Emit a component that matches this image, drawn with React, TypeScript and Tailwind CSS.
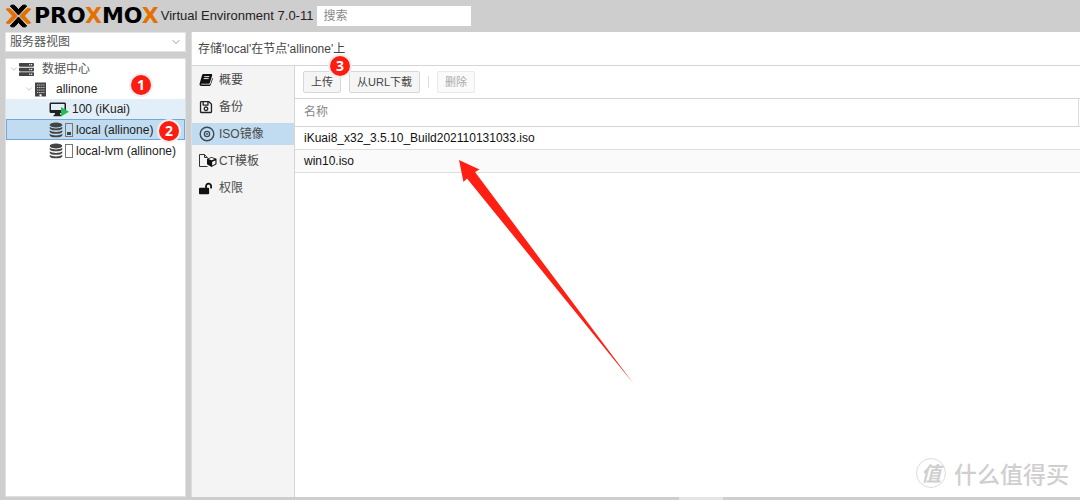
import type { ReactNode } from 'react'
import { FaLockOpen, FaRegSave, FaServer } from 'react-icons/fa'
import { ChevronDown } from 'lucide-react'

const files = ['iKuai8_x32_3.5.10_Build202110131033.iso', 'win10.iso']

function LogoMark() {
  return (
    <svg width="27" height="24" viewBox="0 0 27 24" strokeLinejoin="round" strokeWidth="1" aria-hidden="true">
      <path d="M1.200 5.200c1-1 3.500-1 4.600.1L12.300 12l-6.500 6.700c-1.100 1.100-3.600 1.100-4.600.1L7.600 12z" fill="#e57000" stroke="#e57000" />
      <path d="M25.800 5.200c-1-1-3.500-1-4.600.1L14.700 12l6.500 6.700c1.100 1.100 3.600 1.100 4.600.1L19.400 12z" fill="#e57000" stroke="#e57000" />
      <path d="M5.300 2c1.200-1.300 3.700-1.300 4.900 0l3.300 3.600L16.800 2c1.200-1.300 3.700-1.300 4.900 0l-8.200 9z" fill="#000" stroke="#000" />
      <path d="M5.300 22c1.200 1.300 3.700 1.300 4.900 0l3.300-3.600 3.300 3.600c1.200 1.300 3.700 1.300 4.900 0l-8.200-9z" fill="#000" stroke="#000" />
    </svg>
  )
}

function BookIcon() {
  return (
    <svg width="14" height="14" viewBox="0 0 14 14" aria-hidden="true">
      <path
        d="M4.500 1h7.700c.8 0 1.200.6 1 1.300l-2.300 7.500c-.2.700-.7 1-1.300 1H2.500c-.5 0-.6.600 0 .800h7.700c.7 0 1.100-.3 1.300-.9L13.300 5c.6.300.6.800.4 1.300l-2 5.700c-.3.700-.8 1-1.500 1H2.300C1 13 .2 11.900.6 10.700L3 2.200C3.200 1.400 3.700 1 4.500 1z"
        fill="#111"
      />
      <path d="M5.300 3.600h5M4.700 5.600h5" stroke="#fff" strokeWidth=".9" />
    </svg>
  )
}

function DiscIcon() {
  return (
    <svg width="16" height="16" viewBox="0 0 16 16" fill="none" stroke="#3c4a54" aria-hidden="true">
      <circle cx="8" cy="8" r="6.800" strokeWidth="1.400" />
      <circle cx="8" cy="8" r="2.600" strokeWidth="1.300" />
      <circle cx="8" cy="8" r=".9" fill="#3c4a54" stroke="none" />
    </svg>
  )
}

function TemplateIcon() {
  return (
    <svg width="18" height="14" viewBox="0 0 18 14" aria-hidden="true">
      <path d="M8.500 12.500h-8v-12h5l3 3.300M5.500.5v3h3" fill="none" stroke="#333" />
      <path d="M12.500 3l5 1.800v5.500l-5 2.700L8 10.300V4.800z" fill="#111" />
      <path d="M9.500 5l3-1.200L15.700 5l-3.200 1.300zM13.200 7.800l3.200-1.300v3.200l-3.200 1.700z" fill="#fff" />
    </svg>
  )
}

function BuildingIcon() {
  return (
    <svg width="13" height="15" viewBox="0 0 13 15" aria-hidden="true">
      <path d="M1 .5h11v14H1z" fill="#444" />
      <path d="M3 3h7.500M3 5.500h7.500M3 8h7.500M3 10.500h7.500" stroke="#ccc" strokeDasharray="1.300 .8" />
      <path d="M5.500 12.200h2v2.300h-2z" fill="#fff" />
    </svg>
  )
}

function VmIcon() {
  return (
    <svg width="20" height="15" viewBox="0 0 20 15" aria-hidden="true">
      <path
        d="M2 .5h13.500c.8 0 1.500.6 1.500 1.500v7.500c0 .9-.7 1.500-1.500 1.500H11l.5 2h1v1.200h-8V13h1l.5-2H2c-.8 0-1.500-.6-1.500-1.500V2C.5 1.100 1.200.5 2 .5zM2 2v6h13.500V2z"
        fill="#222"
        fillRule="evenodd"
      />
      <path d="M12 5l8 4.700-8 4.800z" fill="#21bf4b" />
    </svg>
  )
}

function StorageIcon({ used }: { used?: boolean }) {
  return (
    <span className="flex items-center gap-0.5">
      <svg width="14" height="16" viewBox="0 0 14 16" fill="#444" aria-hidden="true">
        <ellipse cx="7" cy="3" rx="6.300" ry="2.500" />
        <path d="M.7 4.800c2.200 2.200 10.400 2.200 12.600 0v1.600c-1 2.600-11.600 2.600-12.600 0z" />
        <path d="M.7 8.300c2.200 2.200 10.400 2.200 12.600 0v1.600c-1 2.600-11.600 2.600-12.600 0z" />
        <path d="M.7 11.800c2.200 2.200 10.400 2.200 12.600 0v1.600c-1 2.600-11.600 2.600-12.600 0z" />
      </svg>
      <svg width="8" height="14" viewBox="0 0 8 14" aria-hidden="true">
        <rect x=".5" y=".5" width="7" height="13" fill="none" stroke="#777" />
        {used && <rect x="2" y="9" width="4" height="3" fill="#444" />}
      </svg>
    </span>
  )
}

function Badge({ n, className }: { n: number; className: string }) {
  return (
    <span
      className={
        'absolute z-10 flex size-5 items-center justify-center rounded-full bg-[#fb1c12] font-["Open_Sans",sans-serif] text-sm font-bold text-white ring-2 ring-[#f1eeee] ' +
        className
      }
    >
      {n}
    </span>
  )
}

function MenuItem({ icon, label, active }: { icon: ReactNode; label: string; active?: boolean }) {
  return (
    <button
      type="button"
      className={'flex h-[22px] w-full items-center pl-[7px] text-left text-[#4a4a4a] ' + (active ? 'bg-[#c1dcf0]' : '')}
    >
      <span className="flex w-5 items-center">{icon}</span>
      {label}
    </button>
  )
}

function Sidebar() {
  return (
    <aside className="flex w-[181px] shrink-0 flex-col gap-1.5">
      <div className="relative">
        <select
          aria-label="视图"
          className="block h-5 w-full appearance-none border border-[#e4e4e4] bg-white pl-1 leading-4 text-[#555] outline-none"
        >
          <option>服务器视图</option>
        </select>
        <ChevronDown size={12} className="pointer-events-none absolute top-1 right-1 text-[#999]" />
      </div>

      <nav className="flex-1 border border-[#e0e0e0] bg-white text-[#222]">
        <button type="button" className="flex h-5 w-full items-center pl-[3px]">
          <ChevronDown size={10} className="text-[#bbb]" />
          <FaServer size={15} className="text-[#444]" />
          <span className="ml-2 text-[#555]">数据中心</span>
        </button>
        <button type="button" className="relative flex h-5 w-full items-center pl-[18px]">
          <ChevronDown size={10} className="text-[#bbb]" />
          <BuildingIcon />
          <span className="ml-[9px]">allinone</span>
          <Badge n={1} className="-top-1 left-[125px]" />
        </button>
        <button type="button" className="flex h-5 w-full items-center gap-[3px] bg-[#e2eff8] pl-[43px]">
          <VmIcon />
          100 (iKuai)
        </button>
        <button
          type="button"
          className="relative flex h-[21px] w-full items-center gap-[3px] bg-[#c1dcf0] pl-[43px] outline -outline-offset-1 outline-[#6fa8d6]"
        >
          <StorageIcon used />
          local (allinone)
          <Badge n={2} className="top-0.5 left-[153px]" />
        </button>
        <button type="button" className="flex h-[21px] w-full items-center gap-[3px] pl-[43px]">
          <StorageIcon />
          local-lvm (allinone)
        </button>
      </nav>
    </aside>
  )
}

function Toolbar() {
  return (
    <div className="flex h-[33px] items-center border-b border-[#d5d5d5] pl-2 text-[11px]">
      <button type="button" className="relative h-[22px] rounded-xs border border-[#d8d8d8] bg-[#f5f5f5] px-[7px] text-[#444]">
        上传
        <Badge n={3} className="-top-4 left-[26px]" />
      </button>
      <button type="button" className="ml-2 h-[22px] rounded-xs border border-[#d8d8d8] bg-[#f5f5f5] px-[7px] text-[#444]">
        从URL下载
      </button>
      <span className="mx-2 h-3 w-px bg-[#ddd]" />
      <button type="button" disabled className="h-[22px] rounded-xs border border-[#e9e9e9] bg-[#fafafa] px-[7px] text-[#aaa]">
        删除
      </button>
    </div>
  )
}

function Content() {
  return (
    <main className="flex min-w-0 flex-1 flex-col border-l border-[#ddd] bg-white">
      <h1 className="flex h-[34px] items-center border-b border-[#d5d5d5] pl-1.5 text-[#444]">存储'local'在节点'allinone'上</h1>
      <div className="flex flex-1">
        <nav className="flex w-[103px] shrink-0 flex-col gap-[5px] border-r border-[#d5d5d5] bg-[#f4f4f4] pt-[3px]">
          <MenuItem icon={<BookIcon />} label="概要" />
          <MenuItem icon={<FaRegSave size={14} className="text-[#222]" />} label="备份" />
          <MenuItem icon={<DiscIcon />} label="ISO镜像" active />
          <MenuItem icon={<TemplateIcon />} label="CT模板" />
          <MenuItem icon={<FaLockOpen size={13} className="text-[#111]" />} label="权限" />
        </nav>
        <div className="min-w-0 flex-1">
          <Toolbar />
          <table className="w-full border-collapse text-left text-[#111]">
            <thead>
              <tr className="h-[27px] border-b border-[#d5d5d5]">
                <th className="pl-[9px] font-normal text-[#888]">名称</th>
                <th className="w-[2px] border-l border-[#ddd]" aria-hidden="true" />
              </tr>
            </thead>
            <tbody>
              {files.map((name) => (
                <tr key={name} className="h-[23px] border-b border-[#dedede] even:bg-[#fafafa]">
                  <td colSpan={2} className="pl-[9px]">
                    {name}
                  </td>
                </tr>
              ))}
            </tbody>
          </table>
        </div>
      </div>
    </main>
  )
}

export default function App() {
  return (
    <div className='relative flex h-screen flex-col overflow-hidden bg-[#cecece] font-["Liberation_Sans","Noto_Sans_CJK_SC",sans-serif] text-xs'>
      <header className="flex h-8 shrink-0 items-center pl-[5px]">
        <LogoMark />
        <span className='ml-0.5 font-["DejaVu_Sans",sans-serif] text-[22px] leading-6 font-bold text-black'>
          PRO<span className="text-[#e57000]">X</span>MO<span className="text-[#e57000]">X</span>
        </span>
        <span className="ml-0.5 text-[13px] text-[#222]">Virtual Environment 7.0-11</span>
        <input
          type="text"
          aria-label="搜索"
          placeholder="搜索"
          className="ml-1 h-5 w-[154px] bg-white px-1.5 outline-none placeholder:text-[#888]"
        />
      </header>

      <div className="flex min-h-0 flex-1 gap-[5px] pb-[3px] pl-[5px]">
        <Sidebar />
        <Content />
      </div>

      <span className="absolute bottom-0 left-[679px] h-[3px] w-11 bg-[#e4e4e4]" />

      <svg
        className="pointer-events-none absolute top-[160px] left-[459px]"
        width="174"
        height="223"
        viewBox="0 0 174 223"
        aria-hidden="true"
      >
        <path d="M0 0l20.500 9.500-4.500 2.500L174 223 8 18.500 4.500 22z" fill="#ff2013" />
      </svg>

      <div className='absolute right-[11px] bottom-3 flex items-center gap-2 font-["Noto_Sans_CJK_SC",sans-serif] text-[#cfcfcf]'>
        <span className="flex size-[30px] items-center justify-center rounded-full border border-[#dcdcdc] text-xl font-bold italic">值</span>
        <span className="text-[23px] leading-[30px] font-medium">什么值得买</span>
      </div>
    </div>
  )
}
